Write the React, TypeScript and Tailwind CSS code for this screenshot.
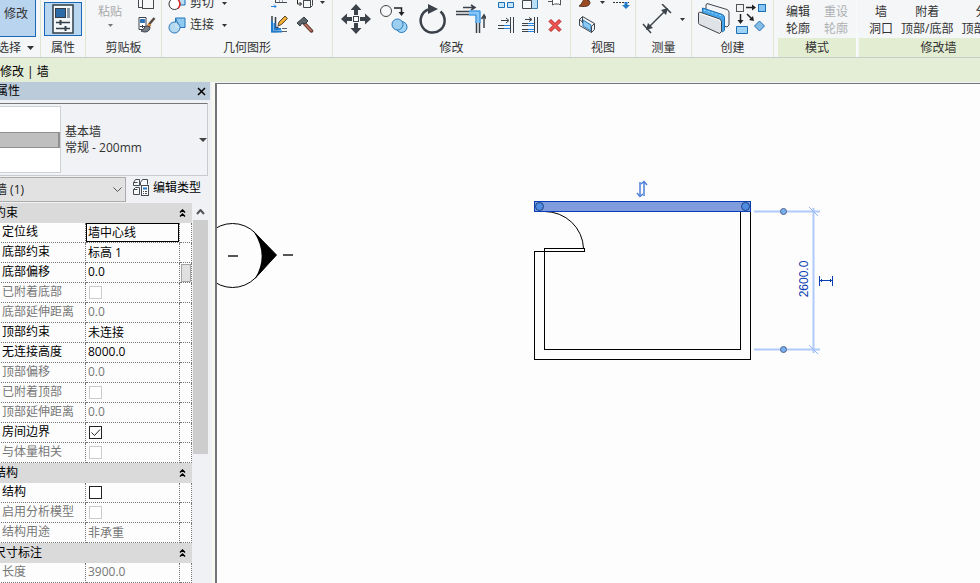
import { useState, type ReactNode } from "react";
import clsx from "clsx";

interface PropertyRow {
  id: string;
  label: string;
  value: string | boolean;
  disabled?: boolean;
  active?: boolean;
  picker?: boolean;
}

interface PropertyGroup {
  title: string;
  rows: PropertyRow[];
}

const groups: PropertyGroup[] = [
  {
    title: "约束",
    rows: [
      { id: "location-line", label: "定位线", value: "墙中心线", active: true },
      { id: "base-constraint", label: "底部约束", value: "标高 1" },
      { id: "base-offset", label: "底部偏移", value: "0.0", picker: true },
      { id: "base-attached", label: "已附着底部", value: false, disabled: true },
      { id: "base-extension", label: "底部延伸距离", value: "0.0", disabled: true },
      { id: "top-constraint", label: "顶部约束", value: "未连接" },
      { id: "height", label: "无连接高度", value: "8000.0" },
      { id: "top-offset", label: "顶部偏移", value: "0.0", disabled: true },
      { id: "top-attached", label: "已附着顶部", value: false, disabled: true },
      { id: "top-extension", label: "顶部延伸距离", value: "0.0", disabled: true },
      { id: "room-bounding", label: "房间边界", value: true },
      { id: "mass", label: "与体量相关", value: false, disabled: true },
    ],
  },
  {
    title: "结构",
    rows: [
      { id: "structural", label: "结构", value: false },
      { id: "analytical", label: "启用分析模型", value: false, disabled: true },
      { id: "usage", label: "结构用途", value: "非承重", disabled: true },
    ],
  },
  {
    title: "尺寸标注",
    rows: [{ id: "length", label: "长度", value: "3900.0", disabled: true }],
  },
];

export default function App() {
  return (
    <div className="flex h-screen flex-col overflow-hidden bg-[#f1f3f6] font-['Open_Sans','Noto_Sans_CJK_SC',sans-serif] text-xs text-[#333]">
      <Ribbon />
      <div className="flex h-6 shrink-0 items-center bg-[#e4edd6] pb-px pt-1 text-black">修改 | 墙</div>
      <div className="flex min-h-0 flex-1">
        <PropertiesPanel />
        <Canvas />
      </div>
    </div>
  );
}

/* ---------- Ribbon ---------- */

function Ribbon() {
  return (
    <header className="flex h-[58px] shrink-0 overflow-hidden border-b border-[#c9cdca] bg-[#f4f6f8]">
      <Panel title="选择" width="w-[41px]" titleClass="-ml-[3px] justify-start gap-1.5" caret>
        <button className="mb-px h-12 w-9 border border-l-0 border-[#1b68b8] bg-[#b9d4ef] pl-1 text-left leading-[17px]">
          修改
        </button>
      </Panel>
      <Panel title="属性" width="w-[45px]">
        <button aria-label="属性" className="mx-auto mb-0.5 flex h-[34px] w-[38px] items-center justify-center border border-[#1b68b8] bg-[#b9d6f0]">
          <PropertiesIcon />
        </button>
      </Panel>
      <Panel title="剪贴板" width="w-[76px]">
        <button className="ml-3 flex h-[35px] flex-col items-center text-[#aaa]">
          <span className="leading-[17px]">粘贴</span>
          <Caret className="mt-1 text-[#777]" />
        </button>
        <IconColumn className="ml-4">
          <CopyClipIcon />
          <MatchTypeIcon />
        </IconColumn>
      </Panel>
      <Panel title="几何图形" width="w-[171px]">
        <div className="ml-1.5 mb-1 flex flex-col gap-1">
          <button className="flex h-[18px] items-center gap-1">
            <CutIcon />
            剪切
            <Caret className="ml-1" />
          </button>
          <button className="flex h-[18px] items-center gap-1">
            <JoinIcon />
            连接
            <Caret className="ml-1" />
          </button>
        </div>
        <IconColumn className="ml-11">
          <CopeIcon />
          <PencilIcon />
        </IconColumn>
        <IconColumn className="ml-2">
          <UnjoinIcon />
          <HammerIcon />
        </IconColumn>
        <Caret className="mb-[34px] ml-1.5" />
      </Panel>
      <Panel title="修改" width="w-[238px]">
        <div className="mb-1 ml-2 flex gap-2">
          <IconButton label="移动"><MoveIcon /></IconButton>
          <IconButton label="复制"><CopyIcon /></IconButton>
          <IconButton label="旋转"><RotateIcon /></IconButton>
          <IconButton label="修剪"><TrimIcon /></IconButton>
        </div>
        <IconColumn className="ml-3">
          <ArrayIcon />
          <TrimOneIcon />
        </IconColumn>
        <IconColumn className="ml-2">
          <ScaleIcon />
          <TrimManyIcon />
        </IconColumn>
        <IconColumn className="ml-2.5">
          <PinIcon />
          <DeleteIcon />
        </IconColumn>
      </Panel>
      <Panel title="视图" width="w-[65px]">
        <IconColumn className="ml-2">
          <BrushIcon />
          <SectionBoxIcon />
        </IconColumn>
        <Caret className="mb-[34px] ml-1" />
        <IconColumn className="ml-2">
          <LineworkIcon />
          <span className="block size-4" />
        </IconColumn>
      </Panel>
      <Panel title="测量" width="w-[56px]">
        <div className="mb-1 ml-1.5">
          <IconButton label="测量"><MeasureIcon /></IconButton>
        </div>
        <Caret className="mb-[17px] ml-2" />
      </Panel>
      <Panel title="创建" width="w-[82px]">
        <div className="mb-1 ml-1.5 flex gap-1.5">
          <IconButton label="创建组"><GroupIcon /></IconButton>
          <IconButton label="创建类似"><SimilarIcon /></IconButton>
        </div>
      </Panel>
      <Panel title="模式" width="w-[79px] ml-1" contextual>
        <div className="mb-px ml-2 flex gap-3.5">
          <TextButton lines={["编辑", "轮廓"]} />
          <TextButton lines={["重设", "轮廓"]} disabled />
        </div>
      </Panel>
      <Panel title="修改墙" width="w-[160px] ml-0.5" contextual>
        <div className="mb-px ml-2.5 flex gap-2">
          <TextButton lines={["墙", "洞口"]} />
          <TextButton lines={["附着", "顶部/底部"]} />
          <TextButton lines={["分离", "顶部/底部"]} />
        </div>
      </Panel>
    </header>
  );
}

function Panel({
  title,
  width,
  titleClass,
  contextual,
  caret,
  children,
}: {
  title: string;
  width: string;
  titleClass?: string;
  contextual?: boolean;
  caret?: boolean;
  children: ReactNode;
}) {
  return (
    <section className={clsx("flex shrink-0 flex-col border-r", contextual ? "border-[#f8fafb]" : "border-[#dde6cf]", width)}>
      <div className="flex h-[38px] items-end overflow-hidden">{children}</div>
      <h2
        className={clsx(
          "flex h-[19px] items-center whitespace-nowrap",
          contextual && "bg-[#e2edd2]",
          titleClass ?? "justify-center",
        )}
      >
        {title}
        {caret && <svg width="7" height="4" className="fill-[#333]"><path d="M0 0h7L3.500 4z" /></svg>}
      </h2>
    </section>
  );
}

function IconColumn({ className, children }: { className: string; children: ReactNode }) {
  return <div className={clsx("mb-[5px] flex flex-col gap-2", className)}>{children}</div>;
}

function IconButton({ label, children }: { label: string; children: ReactNode }) {
  return (
    <button aria-label={label} className="block shrink-0">
      {children}
    </button>
  );
}

function TextButton({ lines, disabled }: { lines: string[]; disabled?: boolean }) {
  return (
    <button disabled={disabled} className={clsx("shrink-0 text-center leading-[17px]", disabled && "text-[#aeb0b2]")}>
      {lines.map((line) => (
        <span key={line} className="block whitespace-nowrap">
          {line}
        </span>
      ))}
    </button>
  );
}

function Caret({ className }: { className?: string }) {
  return (
    <svg width="5" height="3" className={clsx("shrink-0", className)} fill="currentColor">
      <path d="M0 0h5L2.500 3z" />
    </svg>
  );
}

/* ---------- Ribbon icons ---------- */

function PropertiesIcon() {
  return (
    <svg width="22" height="30" fill="none" stroke="#333e48">
      <rect x="1" y="1" width="20" height="28" fill="#f4f7fa" strokeWidth="1.5" />
      <rect x="3.500" y="4.500" width="10" height="9" fill="#2c6aa8" />
      <rect x="15" y="4" width="3" height="10" fill="#8b98a5" stroke="none" />
      <path d="M4 18.500h14M4 24.500h14" strokeWidth="1.300" />
      <path d="M8.500 16v5M13.500 22v5" strokeWidth="2" />
    </svg>
  );
}

function CopyClipIcon() {
  return (
    <svg width="16" height="16" fill="#f7f8f9" stroke="#45484d">
      <rect x=".5" y="1.500" width="11" height="13" />
      <rect x="4.500" y="6.500" width="11" height="9" />
    </svg>
  );
}

function MatchTypeIcon() {
  return (
    <svg width="18" height="16" fill="none" stroke="#3b424b">
      <path d="M1 .5h7v12H1z" fill="#fff" />
      <path d="M2.500 2.500h4v3h-4z" fill="#2d73b8" stroke="#2d73b8" />
      <path d="M2 9.500h5M4.500 8v3" />
      <path d="m16.500 1-6 7" strokeWidth="2.500" stroke="#574a42" />
      <path d="m10.500 6 3 2.500-2 2-2.500-2z" fill="#d98c3f" stroke="none" />
      <path d="M9 9c-3 0-3 4-6 5 4 2 9 1 9-4z" fill="#7b8087" />
    </svg>
  );
}

function CutIcon() {
  return (
    <svg width="18" height="16" fill="none">
      <path d="M7 1h10v9h-8z" fill="#b8def5" stroke="#1c6fb5" />
      <circle cx="6.500" cy="9" r="5.500" fill="#fff" stroke="#333" />
      <path d="M10 4.500c2.600 2.500 2.600 6.500 0 9" stroke="#e02b2b" strokeWidth="1.500" />
    </svg>
  );
}

function JoinIcon() {
  return (
    <svg width="18" height="17" stroke="#2374b8">
      <path d="M7.500 1H17v9.500h-5.500z" fill="#8fcbf1" />
      <path d="M7.500 1v4.500" />
      <circle cx="6.500" cy="10.500" r="5.500" fill="#b5d9ef" />
      <path d="M8 5.500v4.500h3.500" fill="none" stroke="#d5ecfa" />
    </svg>
  );
}

function CopeIcon() {
  return (
    <svg width="16" height="16" fill="none" stroke="#444b55">
      <path d="M4 7.500h12M4 10.500h12M4.500 7v4M8 9h1M11 9h1" />
      <path d="M0 14.500h5m-2-2 2 2-2 2" stroke="#2684df" />
    </svg>
  );
}

function PencilIcon() {
  return (
    <svg width="17" height="17" fill="none">
      <path d="M1 0v15.500h6M4.500 1v10.500h3" stroke="#333e48" strokeWidth="1.500" />
      <path d="M1 5v10.500h10M3.500 7v6H10" stroke="#1f7cd0" strokeWidth="2" />
      <path d="M11 12.500h5M11 15.500h5" stroke="#59616a" />
      <path d="m7 10 1-4 6-6 2.500 2.500-6 6z" fill="#f0ad35" stroke="#5a4630" />
    </svg>
  );
}

function UnjoinIcon() {
  return (
    <svg width="18" height="16" fill="none" stroke="#42474d">
      <path d="M7.500 8.500h7v7h-7zM7.500 8.500l2-2h7v7l-2 2M14.500 8.500l2-2" fill="#f8f9fa" />
      <path d="M1.500 6v6h4m-2-2 2 2-2 2" stroke="#222" />
    </svg>
  );
}

function HammerIcon() {
  return (
    <svg width="18" height="17" fill="none">
      <path d="m8 7 7.500 8" stroke="#653b32" strokeWidth="3.500" strokeLinecap="round" />
      <path d="m8 7 7.500 8" stroke="#c77966" strokeWidth="1.500" />
      <path d="m1 7 7-6 4 4-3 3-3-1-2 3z" fill="#5d636b" stroke="#343a42" />
    </svg>
  );
}

function MoveIcon() {
  return (
    <svg width="30" height="30" fill="#3c424a">
      <path d="M15 0l5.500 6H17v5h-4V6H9.500zM15 30l-5.500-6H13v-5h4v5h3.500zM0 15l6-5.500V13h5v4H6v3.500zM30 15l-6 5.500V17h-5v-4h5V9.500z" />
      <rect x="12.500" y="12.500" width="5" height="5" fill="#fff" stroke="#3c424a" />
    </svg>
  );
}

function CopyIcon() {
  return (
    <svg width="31" height="30" fill="none">
      <circle cx="7" cy="7" r="5.500" fill="#f7f8fa" stroke="#444" />
      <path d="M15 4h7.500v5" stroke="#222" strokeWidth="1.500" />
      <path d="M19.500 8h6l-3 4z" fill="#222" />
      <circle cx="22.500" cy="23" r="5.500" fill="#9fd5f7" stroke="#2878b9" />
      <circle cx="18.500" cy="20.500" r="5.500" fill="#9dceef" stroke="#2878b9" />
    </svg>
  );
}

function RotateIcon() {
  return (
    <svg width="30" height="30" fill="none">
      <path d="M10 5.500A12 12 0 1 0 22.500 7.500" stroke="#3c424a" strokeWidth="2.500" />
      <path d="M10 0l10 5-10 5z" fill="#3c424a" />
    </svg>
  );
}

function TrimIcon() {
  return (
    <svg width="30" height="30" fill="none" stroke="#3c424a">
      <path d="M7 3.500h11M15 1l4 2.500L15 6" strokeWidth="1.500" />
      <path d="M0 7.500h13M0 10.500h13M20.500 17v12M23.500 17v12" strokeWidth="1.500" />
      <path d="M13 9h9v10" stroke="#88c5f4" strokeWidth="5" />
      <path d="M13 7h11v12M13 11h7v8" stroke="#2587dd" />
      <path d="M28 24V12m-2.500 3 2.500-4 2.500 4" strokeWidth="1.500" />
    </svg>
  );
}

function ArrayIcon() {
  return (
    <svg width="16" height="16" fill="#c8e6fa" stroke="#1d6fb8">
      <path d="M.5 9.500h6v5h-6zM9.500 9.500h6v5h-6zM9.500 1.500h6v5h-6z" />
    </svg>
  );
}

function TrimOneIcon() {
  return (
    <svg width="16" height="16" fill="none" stroke="#3c424a">
      <path d="M3 3.500h7M8 1l3 2.500L8 6M0 8.500h6M0 11.500h6M12.500 0v16M15.500 0v16" />
      <path d="M6 8.500h6M6 11.500h6" stroke="#2686dd" />
    </svg>
  );
}

function TrimManyIcon() {
  return (
    <svg width="16" height="16" fill="none" stroke="#3c424a">
      <path d="M3 2.500h6M7 .5l3 2-3 2M0 6.500h6M0 8.500h6M0 12.500h6M0 14.500h6M12.500 0v16M15.500 0v16" />
      <path d="M6 6.500h6M6 8.500h6M6 12.500h6M6 14.500h6" stroke="#2686dd" />
    </svg>
  );
}

function ScaleIcon() {
  return (
    <svg width="16" height="16" fill="#f5f7f9" stroke="#42484f">
      <path d="M9.500 2.500h6v13h-6z" fill="#b9dff7" stroke="#3d7fac" />
      <path d="M.5 7.500h9v8h-9z" />
    </svg>
  );
}

function PinIcon() {
  return (
    <svg width="16" height="16" fill="#fff" stroke="#555">
      <path d="M4.500 5v7l2-1h4l2 1V5M0 8.500h4" />
    </svg>
  );
}

function DeleteIcon() {
  return (
    <svg width="16" height="16">
      <path
        d="m1 4.500 2-2 4 4 4-4 2 2-4 4 4 4-2 2-4-4-4 4-2-2 4-4z"
        fill="#ef5650"
        stroke="#b51f22"
        strokeLinejoin="round"
      />
    </svg>
  );
}

function BrushIcon() {
  return (
    <svg width="16" height="16" fill="none">
      <path d="m8 9 6-7" stroke="#5c5048" strokeWidth="3" />
      <path d="M7 7c-4 0-3 5-7 7 5 1 11 1 11-4z" fill="#9d4b23" stroke="#593423" />
    </svg>
  );
}

function SectionBoxIcon() {
  return (
    <svg width="17" height="17" fill="none" stroke="#3f464e">
      <path d="m.5 3.500 3-3 12 7v6l-3 3-12-7z" fill="#edf1f4" />
      <path d="m4 4 8 5v6l-8-5z" fill="#8bc9f2" stroke="#2c79b8" />
      <path d="M.5 3.500 3.500 6M12.500 16.500v-6l3-3M3.500 1v6" />
    </svg>
  );
}

function LineworkIcon() {
  return (
    <svg width="18" height="16">
      <path d="M0 9.500h16" stroke="#333" strokeDasharray="2 1" />
      <path d="M11.500 9h3v3H17l-4 4-4-4h2.500z" fill="#2179c7" />
    </svg>
  );
}

function MeasureIcon() {
  return (
    <svg width="30" height="30" fill="none" stroke="#3c424a">
      <path d="M6 24 24 6" strokeWidth="1.500" />
      <path d="m1 20 8 9M20 0l9 9" strokeWidth="1.500" />
      <path d="m4 26 2-7 5 5zM26 4l-7 2 5 5z" fill="#3c424a" stroke="none" />
    </svg>
  );
}

function GroupIcon() {
  return (
    <svg width="32" height="31" stroke="#3f454c" strokeLinejoin="round">
      <path d="m9 .5 20 6q2 1 2 3V22l-2 2L8 17V2z" fill="#f4f5f7" />
      <path d="m4.500 5 20 6.500q2 1 2 3V27l-2 2L4 20z" fill="#46a5e8" stroke="#176eb4" />
      <path d="m6 7 18 6" stroke="#a5d9fb" strokeDasharray="2 2" />
      <path d="m1.500 9 20 7q2 1 2 3v9.500l-2 2-20-9q-1-.5-1-2V10z" fill="#dfe2e6" />
      <path d="m2 10.500 19 6.500q1.500 1 1.500 2.500" fill="none" stroke="#fff" />
    </svg>
  );
}

function SimilarIcon() {
  return (
    <svg width="30" height="31" fill="none" stroke="#222">
      <rect x=".5" y="1.500" width="7" height="7" fill="#f1f1f1" stroke="#555" />
      <rect x="22.500" y="1.500" width="7" height="7" fill="#86c5ef" stroke="#1d70b6" />
      <path d="M.5 23.500h11v7H.5z" fill="#9fd3f5" stroke="#1d70b6" />
      <path d="m23.500 18 5 5-5 5-5-5z" fill="#86bde7" stroke="#1d70b6" />
      <path d="M10 4.500h7M4.500 11v7M11 11l5 5" strokeWidth="1.500" />
      <path d="m16 1.500 4 3-4 3zM1.500 17l3 4 3-4zM18 18l-5-1 4-4z" fill="#222" stroke="none" />
    </svg>
  );
}

/* ---------- Properties palette ---------- */

function PropertiesPanel() {
  // the palette is docked partly beyond the left edge of the window
  return (
    <aside className="-ml-2 w-[223px] shrink-0 overflow-hidden border-r-[3px] border-[#f8f8f3] bg-[#eff1f5] pr-1">
      <div className="-mr-0.5 flex h-[18px] items-center justify-between bg-[#bccbda] pl-1 pr-1 text-black">
        <h1>属性</h1>
        <button aria-label="关闭">
          <svg width="9" height="9" className="stroke-black stroke-[1.5]">
            <path d="m1 1 7 7m0-7-7 7" />
          </svg>
        </button>
      </div>
      <button className="mt-[3px] flex h-[73px] w-full items-center border border-b-[#c7cad0] border-r-[#c7cad0] border-t-[#777] bg-[#f0f2f5] text-left">
        <span className="flex h-[67px] w-[68px] shrink-0 items-center border border-[#cdd0d5] bg-white">
          <span className="h-4 w-full border-y border-r-2 border-[#8f8f8f] bg-[#bfbfbf]" />
        </span>
        <span className="ml-1 flex-1 leading-4">
          <span className="block">基本墙</span>
          <span className="block">常规 - 200mm</span>
        </span>
        <svg width="8" height="4" className="fill-[#444]">
          <path d="M0 0h8L4 4z" />
        </svg>
      </button>
      <div className="my-px flex h-[25px] items-stretch">
        <div className="grid w-[134px] shrink-0">
          <select
            aria-label="图元筛选"
            className="col-start-1 row-start-1 appearance-none border border-[#acacac] bg-[#e2e2e2] pl-0.5 text-[#222]"
          >
            <option>墙 (1)</option>
          </select>
          <svg width="9" height="6" fill="none" className="pointer-events-none col-start-1 row-start-1 mr-1 self-center justify-self-end stroke-[#555]">
            <path d="m.5.5 4 4 4-4" />
          </svg>
        </div>
        <button className="flex flex-1 items-center gap-1 pb-1 pl-1.5 text-black">
          <TypeIcon />
          <span className="whitespace-nowrap">编辑类型</span>
        </button>
      </div>
      <div className="flex h-full justify-between">
        <table className="w-[200px] shrink-0 table-fixed border-separate border-spacing-0 self-start bg-[#fdfdfd]">
          <colgroup>
            <col className="w-[94px]" />
            <col />
            <col className="w-3" />
          </colgroup>
          {groups.map((group) => (
            <GroupRows key={group.title} group={group} />
          ))}
        </table>
        <div className="flex w-[15px] flex-col">
          <button aria-label="向上滚动" className="flex h-[17px] shrink-0 items-center justify-center">
            <svg width="9" height="6" fill="none" className="stroke-[#555] stroke-2">
              <path d="m1 5 3.500-4L8 5" />
            </svg>
          </button>
          <div className="h-[234px] bg-[#cdcdcd]" />
        </div>
      </div>
    </aside>
  );
}

function TypeIcon() {
  return (
    <svg width="17" height="17" fill="none" stroke="#444b53">
      <path d="M1.500 3.500 3.500.5h4v6h-6zM1.500 3.500h4M8.500 6.500v-3l2-3h5v5M1.500 10.500l2-2h4v7h-6zM1.500 10.500h4" fill="#f8f9fa" />
      <rect x="9.500" y="6.500" width="7" height="10" fill="#fff" />
      <path d="M11 9.500h4" stroke="#1f78cc" strokeWidth="2" />
      <path d="M11 12.500h1M13 12.500h2M11 14.500h1M13 14.500h2" />
    </svg>
  );
}

function GroupRows({ group }: { group: PropertyGroup }) {
  return (
    <tbody className="text-black">
      <tr>
        <th colSpan={3} className="h-5 bg-[#dadada] p-0 font-normal">
          <button className="flex h-5 w-full items-center justify-between pl-0.5 pr-1.5">
            {group.title}
            <svg width="7" height="8" fill="none" className="stroke-black stroke-[1.5]">
              <path d="m1 3.500 2.500-2.500L6 3.500M1 7.500 3.500 5 6 7.500" />
            </svg>
          </button>
        </th>
      </tr>
      {group.rows.map((row) => (
        <Row key={row.id} row={row} />
      ))}
    </tbody>
  );
}

const cell = "h-5 border-b border-r border-dotted border-[#777] p-0 align-top";

function Row({ row }: { row: PropertyRow }) {
  const [value, setValue] = useState(row.value);

  return (
    <tr className={clsx(row.disabled && "text-[#777]")}>
      <td className={cell}>
        <label htmlFor={row.id} className="block whitespace-nowrap pl-2.5 leading-[17px]">
          {row.label}
        </label>
      </td>
      <td className={cell}>
        {typeof value === "boolean" ? (
          <span className="ml-[3px] mt-[3px] grid size-[13px]">
            <input
              id={row.id}
              type="checkbox"
              checked={value}
              disabled={row.disabled}
              onChange={(e) => setValue(e.target.checked)}
              className="col-start-1 row-start-1 size-[13px] appearance-none border border-[#222] bg-white disabled:border-[#ccc]"
            />
            {value && (
              <svg width="13" height="13" fill="none" className="pointer-events-none col-start-1 row-start-1 stroke-[#222]">
                <path d="m2.500 6.500 3 3 5.500-6" />
              </svg>
            )}
          </span>
        ) : (
          <input
            id={row.id}
            type="text"
            value={value}
            disabled={row.disabled}
            onChange={(e) => setValue(e.target.value)}
            className={clsx(
              "block h-[19px] w-full bg-transparent pb-0.5 pl-0.5 outline-none",
              row.active && "ring-1 ring-inset ring-black",
            )}
          />
        )}
      </td>
      <td className={cell}>
        {row.picker && (
          <button aria-label="关联族参数" className="ml-px mt-px block h-[18px] w-2.5 border border-[#a5a5a5] bg-[#e0e0e0]" />
        )}
      </td>
    </tr>
  );
}

/* ---------- Drawing area ---------- */

function Canvas() {
  return (
    <main className="mt-px min-w-0 flex-1 overflow-hidden border-l-2 border-t border-[#707378] bg-[#fdfdfd]">
      <svg className="block size-full" fill="none">
        <g transform="translate(-217 -84)">
          {/* elevation marker */}
          <circle cx="232.500" cy="255.500" r="32" stroke="#000" />
          <path d="M253.500 231.500 276.500 255 255 278.500Q269 255 253.500 231.500z" fill="#000" />
          <path d="M253.500 231.500 276.500 255 255 278.500" stroke="#000" />
          <path d="M274 259.500 258 276.500" stroke="#fff" strokeWidth=".6" />
          <path d="M228 256h10M283 255h10" stroke="#555" strokeWidth="2" />

          {/* room and door */}
          <path
            d="M750.500 212v147.500h-216v-108h50v-3h-40v101h196V212"
            stroke="#000"
            shapeRendering="crispEdges"
          />
          <path d="M544.500 211.500A39 38 0 0 1 583.500 248.500" stroke="#000" />

          {/* selected wall */}
          <rect x="534.500" y="201.500" width="216" height="10" fill="#819cdc" stroke="#083eb5" />
          <circle cx="539.500" cy="206.500" r="4" fill="#508de0" stroke="#1e4287" />
          <circle cx="745.500" cy="206.500" r="4" fill="#508de0" stroke="#1e4287" />

          {/* flip control */}
          <path d="M640 182v14M644 182v14" stroke="#4d80d8" strokeWidth="1.500" />
          <path d="m637 193 3 3.500 3-2.500M641 184l3-2.500 3 3.500" stroke="#4d80d8" strokeWidth="1.500" />

          {/* temporary dimension */}
          <path d="M754 211.500h66M754 349.500h66M813.500 208v145" stroke="#b0cafb" strokeWidth="2" />
          <path d="m809 207 9 9M809 345l9 9" stroke="#94b5f5" />
          <circle cx="783.500" cy="211.500" r="3" fill="#78aef2" stroke="#4f6482" />
          <circle cx="783.500" cy="349.500" r="3" fill="#78aef2" stroke="#4f6482" />
          <text
            transform="translate(808 279) rotate(-90)"
            textAnchor="middle"
            className="fill-[#0b3db2] font-['Liberation_Sans',sans-serif] text-xs"
          >
            2600.0
          </text>
          <path d="M819.500 276v10M832.500 276v10M820 280.500h12" stroke="#0b3db2" />
          <path d="M821.500 279v3M830.500 279v3" stroke="#0b3db2" />
        </g>
      </svg>
    </main>
  );
}
